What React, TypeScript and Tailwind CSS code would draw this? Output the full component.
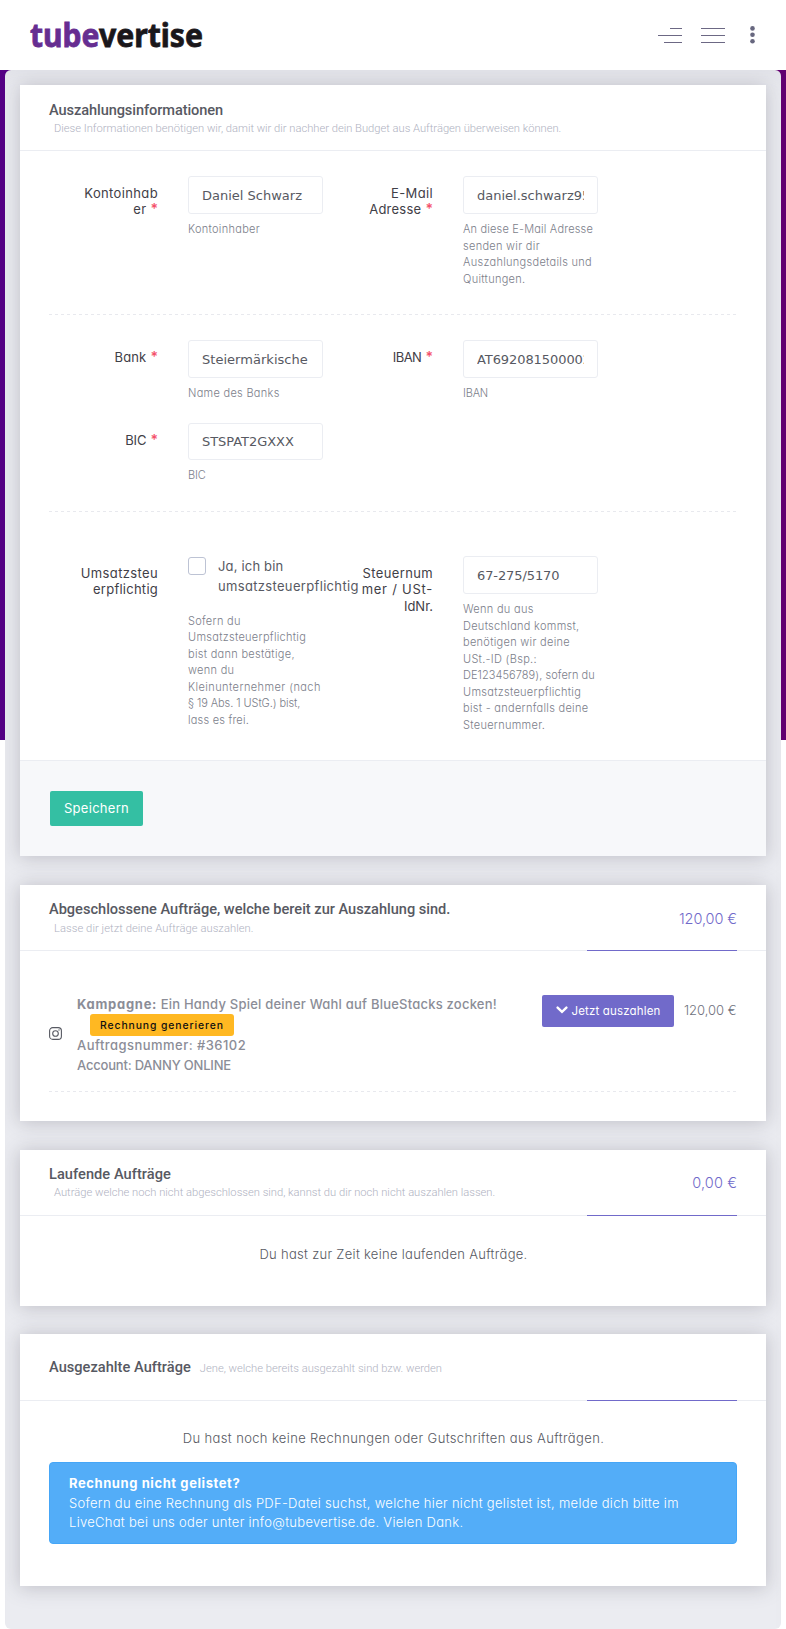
import React from 'react';
import type { ReactNode } from 'react';

const Star = () => <span className="text-[14px] font-semibold tracking-normal text-[#f4516c]">*</span>;

function Label({ children, className = '' }: { children: ReactNode; className?: string }) {
  return (
    <div className={`whitespace-nowrap pt-[8.5px] text-right text-[13px] leading-[16.5px] tracking-[0.36px] text-[#3f4047] ${className}`}>
      {children}
    </div>
  );
}

function Field({ value, height = 'h-[38px]', track = 'tracking-normal', children }: { value: string; height?: string; track?: string; children: ReactNode }) {
  return (
    <div>
      <input
        readOnly
        value={value}
        className={`block w-[135px] rounded-[3px] border border-[#ebedf2] bg-white px-[13px] font-['DejaVu_Sans',sans-serif] text-[13px] text-[#575962] outline-none ${height} ${track}`}
      />
      <Help className="mt-[7px]">{children}</Help>
    </div>
  );
}

function Help({ children, className = '' }: { children: ReactNode; className?: string }) {
  return (
    <p className={`whitespace-nowrap text-[11px] font-light leading-[16.5px] tracking-[0.29px] text-[#7b7e8a] ${className}`}>{children}</p>
  );
}

function Dashed() {
  return <div className="h-px bg-[repeating-linear-gradient(90deg,#e8e9ee_0_3px,transparent_3px_6px)]" />;
}

function Card({ children, className = '' }: { children: ReactNode; className?: string }) {
  return <section className={`bg-white shadow-[0_1px_18px_1px_rgba(69,65,78,0.25)] ${className}`}>{children}</section>;
}

function CardHead({ title, titleClass, sub, subClass, amount, inline }: {
  title: string; titleClass: string; sub: string; subClass: string; amount?: ReactNode; inline?: boolean;
}) {
  return (
    <header className={`flex justify-between border-b border-[#ebedf2] px-[29px] font-[Roboto,sans-serif] ${inline ? 'h-[67px]' : 'h-[66px]'}`}>
      <div className={inline ? 'flex items-center gap-[9px]' : 'flex flex-col pt-[15px]'}>
        <h3 className={`whitespace-nowrap text-[14.6px] font-medium leading-[19px] text-[#575962] ${titleClass}`}>{title}</h3>
        <small className={`whitespace-nowrap text-[11.2px] font-light leading-[17px] text-[#afb2c1] ${inline ? 'pt-[2px]' : 'ml-[5px]'} ${subClass}`}>{sub}</small>
      </div>
      {amount !== undefined && (
        <div className="-mb-px flex w-[150px] items-center justify-end border-b border-[#716aca] font-[Inter,sans-serif] text-[14.5px] font-light text-[#716aca]">
          {amount}
        </div>
      )}
    </header>
  );
}

export default function App() {
  return (
    <div className="flex min-h-[1629px] w-full flex-col bg-white font-[Inter,sans-serif] [font-feature-settings:'cv11']">
      <nav className="z-10 flex h-[70px] items-center justify-between bg-white pl-[29px] pr-[28px]">
        <svg width="200" height="64" viewBox="0 0 200 64">
          <g fontFamily="Noto Sans, sans-serif" fontWeight="700" fontSize="32.5" strokeWidth="0.8">
            <text x="1" y="44" fill="#662d91" stroke="#662d91" textLength="69.5" lengthAdjust="spacingAndGlyphs">tube</text>
            <text x="70" y="44" fill="#1a171b" stroke="#1a171b" textLength="104" lengthAdjust="spacingAndGlyphs">vertise</text>
          </g>
        </svg>
        <div className="flex items-center">
          <svg width="24" height="15" viewBox="0 0 24 15" fill="#6c6884" shapeRendering="crispEdges" className="mr-[19px] mt-px">
            <path d="M12 0h12v1H12zM0 7h24v1H0zM6 14h18v1H6z" />
          </svg>
          <svg width="24" height="15" viewBox="0 0 24 15" fill="#6c6884" shapeRendering="crispEdges" className="mr-[24px] mt-px">
            <path d="M0 0h24v1H0zM0 7h24v1H0zM0 14h24v1H0z" />
          </svg>
          <svg width="5" height="18" viewBox="0 0 5 18" fill="#67677f" className="ml-px mr-[3px]">
            <circle cx="2.5" cy="2.4" r="2.3" /><circle cx="2.5" cy="8.8" r="2.3" /><circle cx="2.5" cy="15.2" r="2.3" />
          </svg>
        </div>
      </nav>

      <div className="flex-1 bg-[linear-gradient(90deg,#540084,#620070)] bg-[length:100%_670px] bg-no-repeat px-[5px]">
        <main className="flex h-[1559px] flex-col gap-[28px] overflow-hidden rounded-[6px] bg-[#ebecf1] px-[15px] pt-[15px] shadow-[inset_0_16px_20px_-10px_rgba(69,65,78,0.06)]">
          <Card className="flex h-[771px] flex-col">
            <CardHead
              title="Auszahlungsinformationen" titleClass="pt-px -mb-px tracking-[-0.09px]"
              sub="Diese Informationen benötigen wir, damit wir dir nachher dein Budget aus Aufträgen überweisen können."
              subClass="pt-px tracking-[-0.01px]"
            />
            <div className="flex-1 px-[29px] pt-[25px]">
              <div className="grid h-[138px] grid-cols-[109px_135px_80px_135px] gap-x-[30px]">
                <Label>Kontoinhab<br />er <Star /></Label>
                <Field value="Daniel Schwarz">Kontoinhaber</Field>
                <Label>E-Mail<br /><span className="tracking-[0.25px]">Adresse</span> <Star /></Label>
                <Field value="daniel.schwarz95@gmail.com">
                  <span className="tracking-[0.18px]">An diese E-Mail Adresse</span><br />senden wir dir<br />Auszahlungsdetails und<br />Quittungen.
                </Field>
              </div>
              <Dashed />
              <div className="mt-[25px] grid h-[83px] grid-cols-[109px_135px_80px_135px] gap-x-[30px]">
                <Label><span className="tracking-[0.15px]">Bank</span> <Star /></Label>
                <Field value="Steiermärkische" track="tracking-[0.03px]">Name des Banks</Field>
                <Label><span className="tracking-[-0.5px]">IBAN</span> <Star /></Label>
                <Field value="AT692081500002" track="tracking-[-0.08px]"><span className="tracking-[-0.2px]">IBAN</span></Field>
              </div>
              <div className="grid h-[88px] grid-cols-[109px_135px] gap-x-[30px]">
                <Label><span className="tracking-[-0.1px]">BIC</span> <Star /></Label>
                <Field value="STSPAT2GXXX" height="h-[37px]" track="tracking-[-0.05px]"><span className="tracking-[-0.1px]">BIC</span></Field>
              </div>
              <Dashed />
              <div className="mt-[44px] grid grid-cols-[109px_135px_80px_135px] gap-x-[30px]">
                <Label>Umsatzsteu<br /><span className="tracking-[0.25px]">erpflichtig</span></Label>
                <div>
                  <label className="flex h-[40px] gap-[12px] whitespace-nowrap pt-px text-[13px] leading-[20px] tracking-[0.33px] text-[#575962]">
                    <span className="size-[18px] shrink-0 rounded-[3px] border border-[#bdc3d4]" />
                    <span className="-mt-[1.5px]"><span className="tracking-[0.17px]">Ja, ich bin</span><br />umsatzsteuerpflichtig</span>
                  </label>
                  <Help className="mt-[16.5px]">
                    Sofern du<br />Umsatzsteuerpflichtig<br />bist dann bestätige,<br />wenn du<br />
                    <span className="tracking-[0.42px]">Kleinunternehmer (nach</span><br /><span className="tracking-[-0.08px]">§ 19 Abs. 1 UStG.) bist,</span><br /><span className="tracking-[0.2px]">lass es frei.</span>
                  </Help>
                </div>
                <Label>Steuernum<br /><span className="tracking-[0.75px]">mer / USt-</span><br /><span className="tracking-normal">IdNr.</span></Label>
                <Field value="67-275/5170" track="tracking-[-0.1px]">
                  Wenn du aus<br />Deutschland kommst,<br />benötigen wir deine<br />USt.-ID (Bsp.:<br />
                  <span className="tracking-[0.06px]">DE123456789), sofern du</span><br />Umsatzsteuerpflichtig<br />bist - andernfalls deine<br />Steuernummer.
                </Field>
              </div>
            </div>
            <footer className="h-[96px] border-t border-[#ebedf2] bg-[#f7f8fa] pl-[30px] pt-[30px]">
              <button className="h-[35px] w-[93px] rounded-[2px] bg-[#34bfa3] text-[13px] tracking-[0.28px] text-white">Speichern</button>
            </footer>
          </Card>

          <Card className="mt-px h-[236px]">
            <CardHead
              title="Abgeschlossene Aufträge, welche bereit zur Auszahlung sind." titleClass="tracking-[-0.01px]"
              sub="Lasse dir jetzt deine Aufträge auszahlen." subClass="pt-px tracking-[0.06px]"
              amount={<span className="pt-[3px] tracking-[-0.08px]">120,00 €</span>}
            />
            <div className="px-[29px] pt-[43px]">
              <div className="flex h-[97px] items-start">
                <svg width="13" height="13" viewBox="0 0 13 13" fill="none" stroke="#575962" strokeWidth="1.1" className="mt-[33px]">
                  <rect x="0.6" y="0.6" width="11.8" height="11.8" rx="3.2" />
                  <circle cx="6.5" cy="6.5" r="2.8" />
                  <circle cx="10" cy="3" r="0.7" fill="#575962" stroke="none" />
                </svg>
                <div className="ml-[15px] flex-1 whitespace-nowrap text-[13px] font-medium leading-[20px] text-[#8b8d97]">
                  <div><b className="font-bold tracking-[0.72px]">Kampagne:</b> <span className="tracking-[0.22px]">Ein Handy Spiel deiner Wahl auf BlueStacks zocken!</span></div>
                  <div className="flex h-[21px] items-start pl-[13px]">
                    <span className="flex h-[22px] w-[144px] items-center justify-center rounded-[3px] bg-[#ffb822] pt-px text-[10.4px] font-medium tracking-[0.9px] text-[#111]">Rechnung generieren</span>
                  </div>
                  <div className="tracking-[0.46px]">Auftragsnummer: #36102</div>
                  <div className="tracking-[-0.2px]">Account: DANNY ONLINE</div>
                </div>
                <button className="mt-px flex h-[32px] w-[132px] items-center justify-center gap-[4px] rounded-[2px] bg-[#716aca] pt-px text-[11.5px] tracking-[0.16px] text-white">
                  <svg width="12" height="8" viewBox="0 0 12 8" fill="none" stroke="#fff" strokeWidth="2.4" strokeLinecap="round" className="-mt-[4px]">
                    <path d="M1.6 1.6 6 5.9 10.4 1.6" />
                  </svg>
                  Jetzt auszahlen
                </button>
                <span className="ml-[10px] mt-[6px] w-[53px] whitespace-nowrap text-[13px] font-light leading-[20px] tracking-[-0.02px] text-[#6f727d]">120,00 €</span>
              </div>
              <Dashed />
            </div>
          </Card>

          <Card className="mt-px h-[156px]">
            <CardHead
              title="Laufende Aufträge" titleClass="tracking-[0.05px]"
              sub="Auträge welche noch nicht abgeschlossen sind, kannst du dir noch nicht auszahlen lassen." subClass="tracking-[0px]"
              amount={<span className="pt-px tracking-[0.1px]">0,00 €</span>}
            />
            <p className="pl-px pt-[28px] text-center text-[13px] font-light leading-[20px] tracking-[0.29px] text-[#575962]">Du hast zur Zeit keine laufenden Aufträge.</p>
          </Card>

          <Card className="h-[252px]">
            <CardHead
              inline title="Ausgezahlte Aufträge" titleClass="tracking-[0.03px]"
              sub="Jene, welche bereits ausgezahlt sind bzw. werden" subClass="" amount=""
            />
            <div className="px-[29px] pt-[27px]">
              <p className="pl-px text-center text-[13px] font-light leading-[20px] tracking-[0.37px] text-[#575962]">Du hast noch keine Rechnungen oder Gutschriften aus Aufträgen.</p>
              <div className="mt-[14px] h-[82px] whitespace-nowrap rounded-[4px] border border-[#45a6f7] bg-[#53adf8] px-[19px] pt-[11px] text-[13px] font-light leading-[19.5px] text-white">
                <b className="font-bold tracking-[0.58px]">Rechnung nicht gelistet?</b><br />
                <span className="tracking-[0.3px]">Sofern du eine Rechnung als PDF-Datei suchst, welche hier nicht gelistet ist, melde dich bitte im</span><br />
                <span className="tracking-[0.29px]">LiveChat bei uns oder unter info@tubevertise.de. Vielen Dank.</span>
              </div>
            </div>
          </Card>
        </main>
      </div>
    </div>
  );
}
